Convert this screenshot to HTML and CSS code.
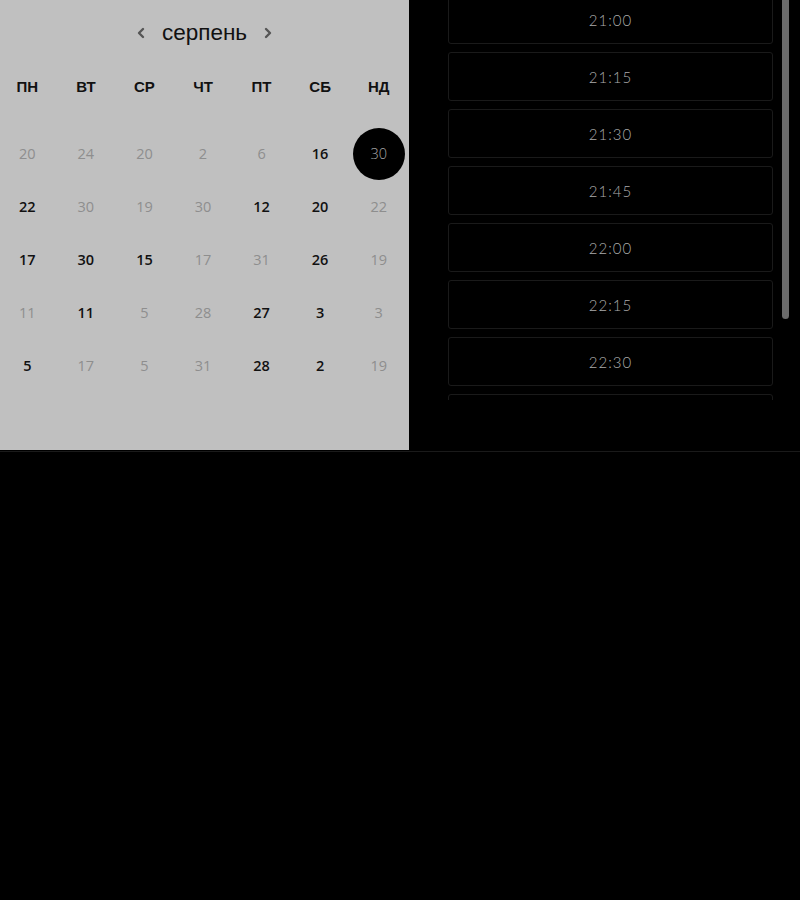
FILE: index.html
```html
<!DOCTYPE html>
<html lang="uk">
<head>
    <meta charset="UTF-8">
    <meta name="viewport" content="width=device-width, initial-scale=1.0">
    <title>Бронювання</title>
    <link rel="stylesheet" href="styles.css">
</head>
<body>

    <div class="booking">
        <div class="calendar">
            <div class="month-nav">
                <button class="nav-btn" aria-label="попередній">
                    <svg width="8" height="12" viewBox="0 0 8 12"><polyline points="6,2 2,6 6,10" fill="none" stroke="#555" stroke-width="2.4" stroke-linecap="round" stroke-linejoin="round"/></svg>
                </button>
                <span class="month-name">серпень</span>
                <button class="nav-btn" aria-label="наступний">
                    <svg width="8" height="12" viewBox="0 0 8 12"><polyline points="2,2 6,6 2,10" fill="none" stroke="#555" stroke-width="2.4" stroke-linecap="round" stroke-linejoin="round"/></svg>
                </button>
            </div>

            <div class="weekdays">
                <span>ПН</span><span>ВТ</span><span>СР</span><span>ЧТ</span><span>ПТ</span><span>СБ</span><span>НД</span>
            </div>

            <div class="days">
                <span class="day muted">20</span>
                <span class="day muted">24</span>
                <span class="day muted">20</span>
                <span class="day muted">2</span>
                <span class="day muted">6</span>
                <span class="day">16</span>
                <span class="day selected"><i>30</i></span>

                <span class="day">22</span>
                <span class="day muted">30</span>
                <span class="day muted">19</span>
                <span class="day muted">30</span>
                <span class="day">12</span>
                <span class="day">20</span>
                <span class="day muted">22</span>

                <span class="day">17</span>
                <span class="day">30</span>
                <span class="day">15</span>
                <span class="day muted">17</span>
                <span class="day muted">31</span>
                <span class="day">26</span>
                <span class="day muted">19</span>

                <span class="day muted">11</span>
                <span class="day">11</span>
                <span class="day muted">5</span>
                <span class="day muted">28</span>
                <span class="day">27</span>
                <span class="day">3</span>
                <span class="day muted">3</span>

                <span class="day">5</span>
                <span class="day muted">17</span>
                <span class="day muted">5</span>
                <span class="day muted">31</span>
                <span class="day">28</span>
                <span class="day">2</span>
                <span class="day muted">19</span>
            </div>
        </div>

        <div class="times">
            <div class="times-window">
                <ul class="slot-list">
                    <li class="slot">21:00</li>
                    <li class="slot">21:15</li>
                    <li class="slot">21:30</li>
                    <li class="slot">21:45</li>
                    <li class="slot">22:00</li>
                    <li class="slot">22:15</li>
                    <li class="slot">22:30</li>
                    <li class="slot">22:45</li>
                </ul>
            </div>
            <div class="scroll-track">
                <div class="scroll-thumb"></div>
            </div>
        </div>
    </div>

</body>
</html>
```

FILE: styles.css
```css
body {
    margin: 0;
    background-color: #000;
    font-family: 'Liberation Sans', Arial, sans-serif;
}
.booking {
    display: flex;
    height: 451px;
    border-bottom: 1px solid #1a1a1a;
}

/* календар */
.calendar {
    width: 409px;
    flex-shrink: 0;
    height: 450px;
    background-color: #c0c0c0;
    padding-top: 18px;
    box-sizing: border-box;
}
.month-nav {
    height: 30px;
    display: flex;
    justify-content: center;
    align-items: center;
    gap: 17px;
}
.nav-btn {
    background: none;
    border: none;
    padding: 0;
    display: flex;
    cursor: pointer;
}
.month-name {
    font-size: 22.5px;
    color: #111;
}
.weekdays,
.days {
    display: grid;
    grid-template-columns: repeat(7, 1fr);
    margin-left: -2px;
    width: 410px;
}
.weekdays {
    margin-top: 29px;
    line-height: 20px;
    font-size: 15px;
    font-weight: bold;
    color: #111;
    text-align: center;
}
.days {
    grid-auto-rows: 53px;
    margin-top: 30px;
    font-family: 'Open Sans', sans-serif;
    font-size: 14.5px;
}
.day {
    display: flex;
    justify-content: center;
    align-items: center;
    color: #111;
    font-weight: 600;
}
.day.muted {
    color: #8e8e8e;
    font-weight: 400;
}
.day.selected i {
    font-style: normal;
    width: 52px;
    height: 52px;
    border-radius: 50%;
    background-color: #000;
    color: #a8a8a8;
    font-weight: 300;
    display: flex;
    justify-content: center;
    align-items: center;
}

/* час */
.times {
    flex: 1;
    display: flex;
    padding-left: 39px;
}
.times-window {
    width: 325px;
    height: 400px;
    overflow: hidden;
}
.slot-list {
    list-style: none;
    margin: -5px 0 0;
    padding: 0;
}
.slot {
    height: 49px;
    box-sizing: border-box;
    margin-bottom: 8px;
    border: 1px solid #1a1a1a;
    border-radius: 3px;
    display: flex;
    justify-content: center;
    align-items: center;
    font-family: 'Lato', sans-serif;
    font-weight: 300;
    font-size: 15px;
    letter-spacing: 1px;
    color: #ababab;
}
.scroll-track {
    width: 7px;
    margin-left: 9px;
}
.scroll-thumb {
    height: 319px;
    background-color: #6b6b6b;
    border-radius: 0 0 4px 4px;
}
```
